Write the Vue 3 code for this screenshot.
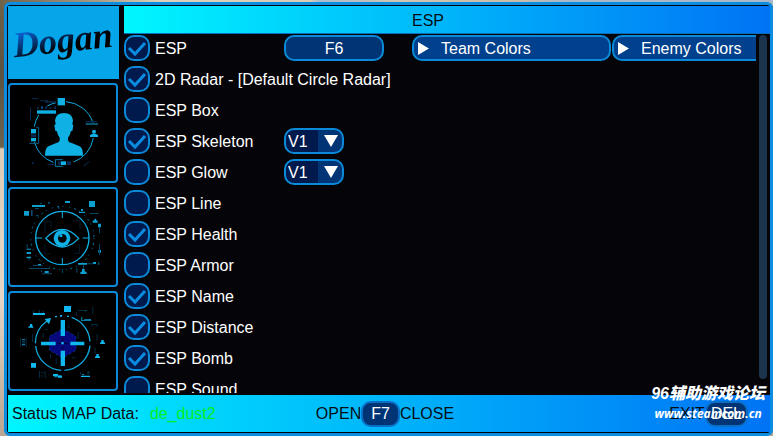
<script setup>
import { ref } from "vue";

const options = ref([
  { name: "ESP", on: true, hotkey: "F6", colors: ["Team Colors", "Enemy Colors"] },
  { name: "2D Radar - [Default Circle Radar]", on: true },
  { name: "ESP Box", on: false },
  { name: "ESP Skeleton", on: true, version: "V1" },
  { name: "ESP Glow", on: false, version: "V1" },
  { name: "ESP Line", on: false },
  { name: "ESP Health", on: true },
  { name: "ESP Armor", on: false },
  { name: "ESP Name", on: true },
  { name: "ESP Distance", on: true },
  { name: "ESP Bomb", on: true },
  { name: "ESP Sound", on: false },
]);

const mapName = ref("de_dust2");
</script>

<template>
  <div class="window">
    <div class="body">
      <nav class="sidebar">
        <div class="logo"><span>Dogan</span></div>

        <!-- player -->
        <button class="tab" aria-label="Player">
          <svg viewBox="30 15 318 288">
            <g fill="none" stroke="#0fa8dc" stroke-width="3">
              <path d="M198 65A93 93 0 0 1 279 128M280 174A93 93 0 0 1 221 246M160 247A93 93 0 0 1 103 186M103 140A93 93 0 0 1 116 105M142 78A93 93 0 0 1 168 68" />
              <path d="M108 143h8v47H88" stroke="#075f88" />
              <path d="M188 239h-22v20h22" stroke="#0a7fae" />
              <path d="M257 132h37" />
            </g>
            <g fill="#0fb0e4">
              <path d="M165 121q3-22 27-22t27 22l-2 12 3 3-3 17h-4q-3 13-9 20v8q2 7 13 9l20 8q12 4 12 29H135q0-25 12-29l20-8q11-3 12-9v-8q-6-8-9-20h-4l-3-17 4-4z" />
              <rect x="173" y="54" width="22" height="22" />
              <rect x="111" y="91" width="57" height="10" />
              <rect x="93" y="147" width="15" height="13" />
              <rect x="93" y="174" width="15" height="10" />
              <rect x="183" y="244" width="15" height="11" />
              <circle cx="282" cy="155" r="6" />
              <path d="M270 171v-6l8-4h8l8 4v6z" />
            </g>
            <g fill="#08294f">
              <path d="M96 54h18v3H96zM120 61h24v3h-24zM135 64h33v4h-33zM90 82h3v40h-3zM111 82h6v5h-6zM135 79h7v8h-7zM149 82h5v5h-5zM162 79h6v8h-6z" />
              <path d="M93 163h15v9H93zM174 244h9v11h-9zM201 244h12v11h-12zM142 252h20v3h-20zM96 246h6v5h-6zM257 123h34v4h-34zM250 258l18-16v3l-16 15z" />
            </g>
            <rect x="123" y="79" width="6" height="7" fill="#08539b" />
          </svg>
        </button>

        <!-- visuals -->
        <button class="tab" aria-label="Visuals">
          <svg viewBox="30 15 318 288">
            <g fill="none" stroke="#0fb0e4" stroke-width="4">
              <circle cx="187" cy="162" r="80" />
              <path d="M187 82v20M187 222v20M107 162h19M248 162h19" stroke-width="3" />
              <path d="M137 163Q187 109 236 163Q187 215 137 163z" />
            </g>
            <circle cx="187" cy="162" r="95" fill="none" stroke="#087ba8" stroke-width="3" stroke-dasharray="3 12 6 10 3 18" />
            <circle cx="186" cy="163" r="25" fill="#0fb0e4" />
            <circle cx="187" cy="163" r="13" fill="#020508" />
            <rect x="179" y="151" width="8" height="8" fill="#0fb0e4" />
            <path d="M135 112h18v20M135 112v36M135 180v30h15M220 110h20v25M238 180v28h-16" fill="none" stroke="#061a2b" stroke-width="3" />
            <g fill="#0d9fce">
              <path d="M96 63h39v6H96zM195 51h15v6h-15zM267 51h18v18h-18zM72 81h15v14H72z" />
              <path d="M80 194h13v3H80zM80 204h13v6H80zM80 218h13v5H80zM114 240h9v6h-9zM134 261h12v6h-12z" />
              <path d="M243 75h6v6h-6zM237 83h18v4h-18zM278 116v-6l5-1 1-5h4l1 5 4 2v5zM294 119h9v11h-9zM295 198h8v8h-8zM234 237h27v5h-27zM279 234h9v6h-9zM246 255h8v7l6 3v5h-19v-5l5-3z" />
            </g>
            <g fill="#06496a">
              <path d="M144 54h6v5h-6zM120 57h6v3h-6zM105 72h12v3h-12zM93 78h5v18h-5zM270 87h25v3h-25zM297 130h3v18h-3zM297 180h3v34h-3zM80 180h3v14h-3zM86 223h3v6h-3z" />
              <path d="M99 243h28v3H99zM87 252h63v3H87zM123 259h3v6h-3zM126 268h30v3h-30zM186 255h3v12h-3zM262 238h18v3h-18zM294 234h4v9h-4zM249 243h3v12h-3zM229 251h3v15h-3zM108 93h8v4h-8zM174 69h4v5h-4z" />
            </g>
          </svg>
        </button>

        <!-- aim -->
        <button class="tab" aria-label="Aim">
          <svg viewBox="30 15 318 288">
            <path d="M188 122l40 23v42l-40 23-40-23v-42z" fill="#08087d" />
            <path d="M188 122l40 23v42l-40 23-40-23v-42z" fill="none" stroke="#064b87" stroke-width="2" stroke-dasharray="8 7" />
            <path d="M215 88A82 82 0 0 1 270 160M270 173A82 82 0 0 1 193 247M184 247A82 82 0 0 1 107 174M106 166A82 82 0 0 1 141 99" fill="none" stroke="#0fa8dc" stroke-width="4" />
            <g fill="#0fb8ee">
              <path d="M134 93l19-3-6 19z" />
              <path d="M182 96h13v48h-13zM182 188h13v46h-13zM123 161h44v11h-44zM211 161h42v11h-42z" />
              <path d="M192 54h21v18h-21zM93 225h15v14H93zM99 75h36v6H99zM159 258h15v6h-15zM174 264h12v5h-12zM243 263h27v4h-27z" />
              <path d="M184 162h7v7h-7zM165 84h6v4h-6zM180 81h6v5h-6zM201 83h6v4h-6z" />
              <path d="M90 108h7v6l3 2v3H85v-3l5-2zM304 156h7v6l4 2v4h-15v-4l4-2zM289 198h7v6l4 2v4h-15v-4l4-2z" />
            </g>
            <path d="M188 150v9M188 174v9M174 166h9M193 166h9" stroke="#020220" stroke-width="3" />
            <g fill="#087aa8">
              <path d="M244 86h3v10h27v3h-31zM253 93h20v3h-20zM66 153h9v4h-9zM66 167h9v5h-9zM162 264h12v4h-12zM173 261h12v3h-12zM246 258h7v3h-7zM255 66h4v4h-4z" />
            </g>
            <g fill="#052a40">
              <path d="M100 66h3v9h-3zM116 66h4v8h-4zM128 68h4v7h-4zM228 72h3v12h-3zM234 66h22v3h-22zM277 57h3v22h-3zM273 108h20v3h-20zM275 111h3v5h-3zM290 111h3v5h-3z" />
              <path d="M60 150h3v27h-3zM77 150h3v27h-3zM66 159h9v6h-9zM96 138h3v24h-3zM290 138h3v20h-3zM284 180h3v18h-3zM117 249h3v20h-3zM134 249h3v20h-3zM124 252h7v3h-7zM124 260h3v8h-3zM240 251h3v10h-3zM262 249h6v10h-6z" />
              <path d="M135 123h8v3h-8zM128 135h3v14h-3zM233 132h3v20h-3zM205 110h3v10h-3zM150 199h3v12h-3zM215 208h12v3h-12zM167 210h3v18h-3z" />
            </g>
          </svg>
        </button>
      </nav>

      <main class="panel">
        <h1 class="title">ESP</h1>
        <div class="scroll">
          <ul class="options">
            <li v-for="opt in options" :key="opt.name" class="row">
              <label class="check">
                <span class="box">
                  <input type="checkbox" v-model="opt.on" />
                  <svg v-if="opt.on" viewBox="0 0 26 26">
                    <path d="M5 13l6 6L21 8" fill="none" stroke="#0a8de0" stroke-width="3" />
                  </svg>
                </span>
                <span class="name">{{ opt.name }}</span>
              </label>
              <button v-if="opt.hotkey" class="hotkey">{{ opt.hotkey }}</button>
              <span v-if="opt.version" class="version">
                <select v-model="opt.version" :aria-label="opt.name + ' version'">
                  <option>V1</option>
                  <option>V2</option>
                </select>
                <svg viewBox="0 0 14 12"><path d="M0 0h14L7 12z" fill="#fff" /></svg>
              </span>
              <div v-if="opt.colors" class="colors">
                <button v-for="c in opt.colors" :key="c" class="fold">
                  <svg viewBox="0 0 11 13"><path d="M0 0l11 6.5L0 13z" fill="#fff" /></svg>
                  <span class="name">{{ c }}</span>
                </button>
              </div>
            </li>
          </ul>
          <div class="bar"></div>
        </div>
      </main>
    </div>

    <footer class="status">
      <div class="map">
        <span>Status MAP Data:</span>
        <span class="map-name">{{ mapName }}</span>
      </div>
      <div class="keys">OPEN<button class="key">F7</button>CLOSE</div>
      <div class="keys exit">EXIT<button class="key">DEL</button></div>
    </footer>

    <div class="watermark">
      <span class="forum">96辅助游戏论坛</span>
      <span class="site">www.steamcom.cn</span>
    </div>
  </div>
</template>

<style>
body {
  background: linear-gradient(180deg, #6f6248 0, #5c5240 70px, #6b6350 147px, #dccdb9 149px, #e3d6c6 300px, #b8a592 100%);
}

#app {
  background: linear-gradient(90deg, #6f6248, #a89c84 100px, #ddd2bb 160px, #d8ccb5 310px, #a9bccf 320px, #d0c5b0 400px, #c9bda8 520px, #a9b8c8 560px, #a9b8c8) 0 0 / 100% 6px no-repeat;
  overflow: hidden;
}
</style>

<style scoped>
* {
  box-sizing: border-box;
}

.window {
  position: relative;
  display: flex;
  flex-direction: column;
  height: calc(100vh - 2px);
  margin: 2px 0 0 4px;
  padding: 1px 0 1px 1px;
  border: 3px solid #0a8de0;
  border-radius: 6px;
  background: #050509;
  color: #fff;
  font-family: "Liberation Sans", Arial, sans-serif;
  font-size: 16px;
  line-height: 20px;
}

button,
select {
  margin: 0;
  padding: 0;
  color: inherit;
  font: inherit;
}

.body {
  display: flex;
  flex: 1;
  gap: 5px;
  min-height: 0;
  padding-bottom: 2px;
}

.sidebar {
  display: flex;
  flex-direction: column;
  gap: 4px;
  width: 111px;
}

.logo {
  display: flex;
  align-items: center;
  justify-content: center;
  flex: none;
  height: 73px;
  background: #05a5ea;
}

.logo span {
  padding: 0 6px 6px;
  background: linear-gradient(165deg, #0a5cc8 25%, #000 55%);
  background-clip: text;
  color: transparent;
  font: italic bold 36px/60px "Liberation Serif", serif;
  transform: rotate(-6deg);
}

.tab {
  flex: none;
  width: 110px;
  height: 100px;
  border: 2px solid #0a8ad8;
  border-radius: 4px;
  background: #000;
}

.tab svg {
  display: block;
  width: 100%;
  height: 100%;
}

.panel {
  display: flex;
  flex: 1;
  flex-direction: column;
  min-width: 0;
}

.title {
  flex: none;
  height: 28px;
  margin: 0;
  padding-right: 38px;
  border-bottom: 1px solid #0a6db8;
  background: linear-gradient(90deg, #00f6ff, #0073f5);
  color: #050d14;
  font-size: 16px;
  font-weight: normal;
  line-height: 29px;
  text-align: center;
}

.scroll {
  display: flex;
  flex: 1;
  gap: 3px;
  min-height: 0;
  padding: 1px 3px 0 0;
}

.options {
  display: flex;
  flex: 1;
  flex-direction: column;
  gap: 5px;
  min-width: 0;
  margin: 0;
  padding: 0;
  list-style: none;
  overflow: hidden;
}

.bar {
  width: 8px;
  margin-bottom: 14px;
  border-radius: 4px;
  background: #1b334c;
}

.row {
  display: grid;
  flex: none;
  grid-template-columns: 160px 128px 1fr;
  height: 26px;
}

.check {
  display: flex;
  align-items: center;
  gap: 5px;
  white-space: nowrap;
}

.name {
  padding-top: 2px;
}

.box {
  display: grid;
  width: 26px;
  height: 26px;
}

.box > * {
  grid-area: 1 / 1;
  width: 26px;
  height: 26px;
}

.box svg {
  pointer-events: none;
}

.box input {
  margin: 0;
  border: 2px solid #0a8ad8;
  border-radius: 10px;
  background: #001a4d;
  appearance: none;
}

.hotkey {
  width: 100px;
  padding-top: 2px;
  border: 2px solid #0a8ad8;
  border-radius: 10px;
  background: #003474;
}

.version {
  display: grid;
  align-items: center;
  width: 60px;
}

.version > * {
  grid-area: 1 / 1;
}

.version select {
  width: 60px;
  height: 26px;
  padding: 2px 0 0 2px;
  border: 2px solid #0a8ad8;
  border-radius: 10px;
  background: linear-gradient(90deg, #001a4d 32px, #003474 32px);
  appearance: none;
}

.version svg {
  justify-self: end;
  width: 14px;
  height: 12px;
  margin-right: 6px;
  pointer-events: none;
}

.colors {
  display: flex;
  gap: 1px;
  min-width: 0;
}

.fold {
  display: flex;
  align-items: center;
  flex: none;
  gap: 12px;
  width: 199px;
  padding-left: 4px;
  border: 2px solid #0a8ad8;
  border-radius: 10px;
  background: #00408c;
}

.fold svg {
  width: 11px;
  height: 13px;
}

.status {
  display: grid;
  flex: none;
  align-items: center;
  grid-template-columns: 1fr auto 1fr;
  height: 37px;
  padding: 0 12px 0 4px;
  background: linear-gradient(90deg, #00f6ff, #0073f5);
  color: #050d14;
}

.map {
  display: flex;
  gap: 11px;
}

.map-name {
  color: #00f020;
}

.keys {
  display: flex;
  align-items: center;
}

.exit {
  justify-content: flex-end;
  padding-right: 10px;
}

.key {
  height: 26px;
  padding: 0 8px;
  border: 2px solid #0a6fc4;
  border-radius: 10px;
  background: #003474;
  color: #fff;
}

.exit .key {
  padding: 0 4px;
}

/* forum mark lies over the lower right corner */
.watermark {
  position: absolute;
  right: 5px;
  bottom: 9px;
  display: flex;
  flex-direction: column;
  align-items: center;
  color: #fff;
  font-style: italic;
  font-weight: bold;
  white-space: nowrap;
  pointer-events: none;
}

.forum {
  font-family: "Liberation Sans", "Noto Sans CJK SC", sans-serif;
  font-size: 16px;
  font-weight: 900;
  line-height: 20px;
}

.site {
  font-family: "Open Sans", sans-serif;
  font-size: 12px;
  line-height: 20px;
}
</style>
